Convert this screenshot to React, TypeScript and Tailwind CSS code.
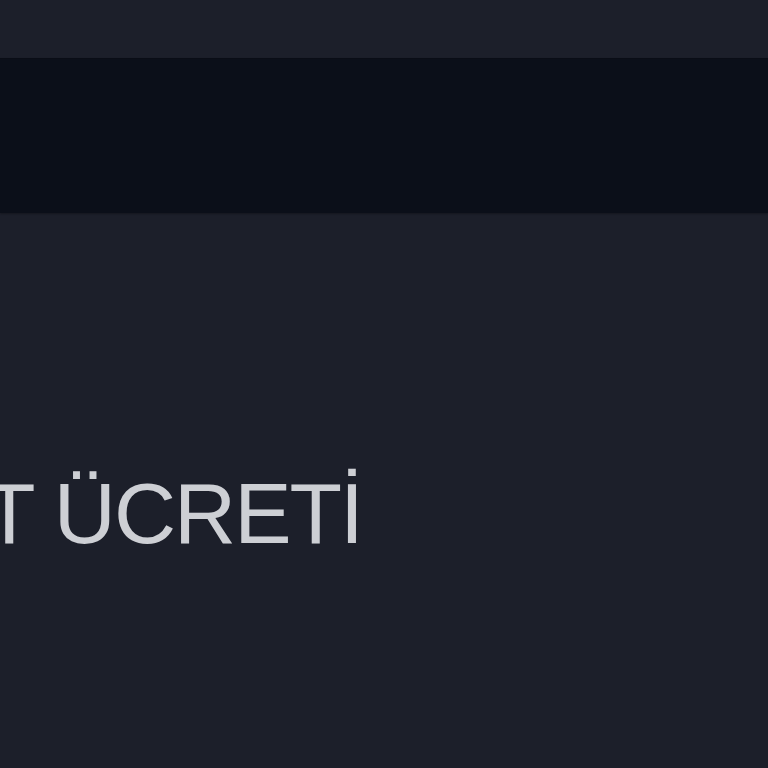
export default function App() {
  return (
    <div className="w-[768px] h-[768px] overflow-hidden bg-[#1c1f2a] flex flex-col" style={{ fontFamily: '"Liberation Sans", Arial, sans-serif' }}>
      <div className="h-[58px] shrink-0" />
      <div className="h-[155px] shrink-0 bg-[#0b0f19] border-t border-[#0a0d16] shadow-[0_1px_2px_rgba(0,0,0,0.3)]" />
      <div className="pt-[257px] overflow-hidden">
        <div className="ml-[-17px] text-[86px] leading-none tracking-[-2px] text-[#cdcfd4] whitespace-nowrap">T ÜCRETİ</div>
      </div>
    </div>
  );
}
